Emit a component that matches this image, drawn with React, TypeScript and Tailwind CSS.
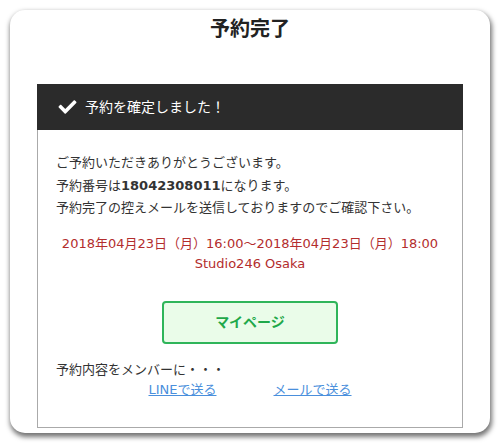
import { FaCheck } from "react-icons/fa";

const font = { fontFamily: '"DejaVu Sans", "Noto Sans CJK JP", sans-serif' };

export default function App() {
  return (
    <div className="min-h-[444px] bg-white p-[10px]" style={font}>
      <div className="w-[480px] h-[423px] rounded-[15px] bg-white pt-[5px] shadow-[1px_3px_5px_1px_rgba(0,0,0,0.55)]">
        <h1 className="text-center text-[20px] font-bold leading-[28px] text-[#222]">予約完了</h1>

        <div className="mx-[27px] mt-[41px] border border-[#aaaaaa]">
          <div className="-mx-px -mt-px flex h-[46px] items-center gap-[6px] bg-[#2b2b2b] pl-[19px] text-white">
            <FaCheck className="h-[18px] w-[23px]" />
            <span className="text-[14px]">予約を確定しました！</span>
          </div>

          <div className="px-[18px] pt-[22px] pb-[28px] text-[13px] text-[#333]">
            <p className="leading-[22.5px]">
              ご予約いただきありがとうございます。
              <br />
              予約番号は<span className="font-bold">18042308011</span>になります。
              <br />
              予約完了の控えメールを送信しておりますのでご確認下さい。
            </p>

            <div className="mt-[14px] text-center leading-[20px] text-[#b32d2d]">
              <p>2018年04月23日（月）16:00〜2018年04月23日（月）18:00</p>
              <p>Studio246 Osaka</p>
            </div>

            <div className="mt-[27px] flex justify-center">
              <button className="h-[43px] w-[176px] rounded-[4px] border-2 border-[#2fb55a] bg-[#eafce9] text-[14px] font-bold text-[#1fa84a]">
                マイページ
              </button>
            </div>

            <p className="mt-[16px] leading-[20px]">予約内容をメンバーに・・・</p>
            <div className="flex justify-center gap-[57px] leading-[19px] text-[#4a8fdc]">
              <a href="#" className="underline">LINEで送る</a>
              <a href="#" className="underline">メールで送る</a>
            </div>
          </div>
        </div>
      </div>
    </div>
  );
}
